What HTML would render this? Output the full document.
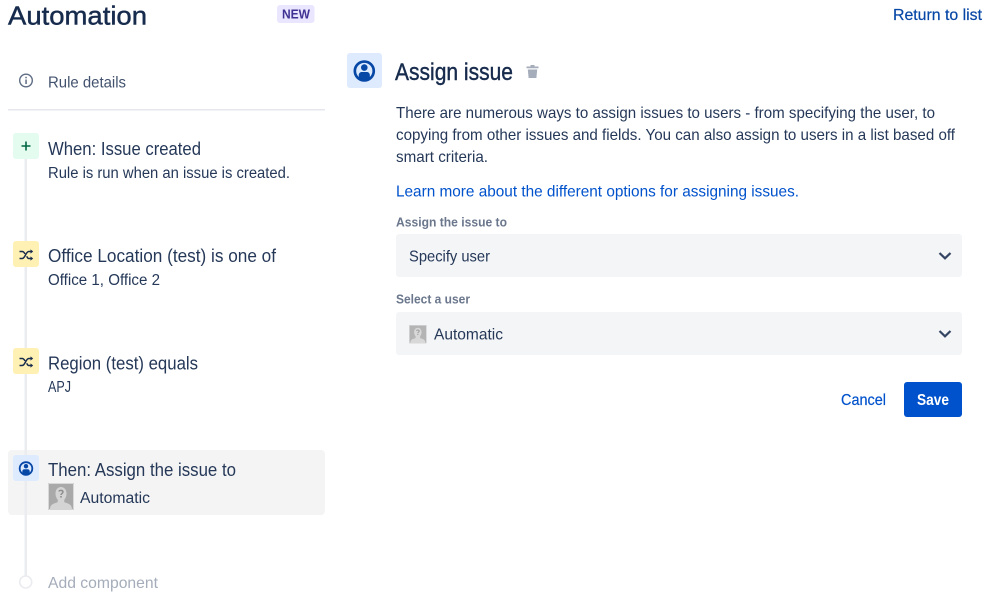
<!DOCTYPE html>
<html><head><meta charset="utf-8"><title>Automation</title>
<style>
html,body{margin:0;padding:0;background:#fff;width:999px;height:606px;overflow:hidden}
svg{display:block}
text{font-family:"Liberation Sans",sans-serif;white-space:pre}
.t{font-size:18px;fill:#253858}
.s{font-size:15.5px;fill:#253858}
.p{font-size:16px;fill:#253858}
.l{font-size:13px;font-weight:bold;fill:#6b778c}
</style></head><body>
<svg width="999" height="606" viewBox="0 0 999 606" xmlns="http://www.w3.org/2000/svg">
<defs>
<g id="sh"><path d="M2.500 9.500h2.700c3 0 3.600-7 6.600-7h2.700M2.500 2.500h2.700c1.300 0 2.100 1.100 2.800 2.400M9.700 7.300c.6 1.200 1.200 2.200 2.100 2.200h2.700" fill="none" stroke="#172b4d" stroke-width="1.500"/><path d="M13.500 .4l2.700 2.100-2.700 2.100zM13.500 7.400l2.700 2.100-2.700 2.100z" fill="#172b4d"/></g>
<g id="av"><rect width="26" height="27" rx="1" fill="#a9a9a9"/><rect x=".5" y=".5" width="25" height="26" rx="1" fill="none" stroke="#d8d8d8"/><path d="M2 27c0-5 2-6 7-7.500 1-.5 1-2 .5-3-1.500-2-2-4-2-6 0-4 2.500-6.500 5.500-6.500s5.500 2.500 5.500 6.500c0 2-.5 4-2 6-.5 1-.5 2.500.5 3 5 1.500 7 2.500 7 7.500z" fill="#d4d4d4"/><path d="M11 8.500c.3-1.500 3.800-1.700 4 .3.100 1.500-2 1.700-2 3.200" fill="none" stroke="#8e8e8e" stroke-width="1.500"/><rect x="12.200" y="13" width="1.600" height="1.600" fill="#8e8e8e"/></g>
<g id="us"><circle cx="13" cy="13" r="6.300" fill="none" stroke="#0747a6" stroke-width="1.800"/><circle cx="13" cy="10.700" r="2.200" fill="#0747a6"/><path d="M9.300 17.500v-1.800c0-1.100.9-2 2-2h3.400c1.100 0 2 .9 2 2v1.800c-1 .8-2.300 1.200-3.700 1.200s-2.700-.4-3.700-1.200z" fill="#0747a6"/></g>
</defs>

<text x="8" y="24.500" font-size="26" fill="#172b4d" stroke="#172b4d" stroke-width=".45" textLength="139" lengthAdjust="spacingAndGlyphs">Automation</text>
<rect x="277" y="5" width="37.500" height="18" rx="3" fill="#eae6ff"/>
<text x="282" y="18.500" font-size="12.500" font-weight="bold" fill="#403294" textLength="28" lengthAdjust="spacingAndGlyphs">NEW</text>
<text x="893" y="20" font-size="16" fill="#0747a6" stroke="#0747a6" stroke-width=".2" textLength="89" lengthAdjust="spacingAndGlyphs">Return to list</text>

<circle cx="26" cy="80.500" r="6.300" fill="none" stroke="#5e6c84" stroke-width="1.400"/>
<rect x="25.300" y="79.500" width="1.500" height="4.500" fill="#5e6c84"/><rect x="25.300" y="76.800" width="1.500" height="1.500" fill="#5e6c84"/>
<text x="48" y="87.500" class="p" style="fill:#42526e" textLength="78" lengthAdjust="spacingAndGlyphs">Rule details</text>
<rect x="8" y="109" width="317" height="1.500" fill="#e5e7ec"/>

<rect x="24.500" y="150" width="2.500" height="428" fill="#ebecf0"/>

<rect x="13" y="133" width="26" height="26" rx="3" fill="#e3fcef"/>
<path d="M26 141.500v9M21.500 146h9" stroke="#006644" stroke-width="1.600"/>
<text x="48" y="155" class="t" textLength="153" lengthAdjust="spacingAndGlyphs">When: Issue created</text>
<text x="48" y="178" class="s" textLength="242" lengthAdjust="spacingAndGlyphs">Rule is run when an issue is created.</text>

<rect x="13" y="241" width="26" height="26" rx="3" fill="#fff0b3"/>
<use href="#sh" x="17" y="249"/>
<text x="48" y="262" class="t" textLength="228" lengthAdjust="spacingAndGlyphs">Office Location (test) is one of</text>
<text x="48" y="285" class="s" textLength="112" lengthAdjust="spacingAndGlyphs">Office 1, Office 2</text>

<rect x="13" y="348" width="26" height="26" rx="3" fill="#fff0b3"/>
<use href="#sh" x="17" y="356"/>
<text x="48" y="369.500" class="t" textLength="150" lengthAdjust="spacingAndGlyphs">Region (test) equals</text>
<text x="48" y="392" class="s" textLength="23" lengthAdjust="spacingAndGlyphs">APJ</text>

<rect x="8" y="450" width="317" height="65" rx="4" fill="#f4f4f4"/>
<rect x="24.500" y="450" width="2.500" height="65" fill="#ebecf0"/>
<rect x="13" y="455" width="26" height="26" rx="3" fill="#deebff"/>
<use href="#us" x="13" y="455.500"/>
<text x="48" y="476" class="t" textLength="188" lengthAdjust="spacingAndGlyphs">Then: Assign the issue to</text>
<use href="#av" x="48" y="483"/>
<text x="80" y="503" class="s" textLength="70" lengthAdjust="spacingAndGlyphs">Automatic</text>

<circle cx="25.700" cy="582" r="6" fill="#fff" stroke="#ebecf0" stroke-width="1.600"/>
<text x="48" y="588" class="p" style="fill:#a5adba" textLength="110" lengthAdjust="spacingAndGlyphs">Add component</text>

<rect x="347" y="53" width="35" height="35" rx="3" fill="#deebff"/>
<g transform="translate(344.800 51.500) scale(1.500)"><use href="#us"/></g>
<text x="395" y="80" font-size="24" fill="#172b4d" stroke="#172b4d" stroke-width=".4" textLength="118" lengthAdjust="spacingAndGlyphs">Assign issue</text>
<path d="M526.500 66.500h12v1.800h-12zM530.500 65h4v1.500h-4zM527.800 69.500h9.400l-.8 8.500h-7.800z" fill="#a5adba"/>

<text x="396" y="118" class="p" textLength="539" lengthAdjust="spacingAndGlyphs">There are numerous ways to assign issues to users - from specifying the user, to</text>
<text x="396" y="140" class="p" textLength="559" lengthAdjust="spacingAndGlyphs">copying from other issues and fields. You can also assign to users in a list based off</text>
<text x="396" y="162" class="p" textLength="92" lengthAdjust="spacingAndGlyphs">smart criteria.</text>
<text x="396" y="196.500" class="p" style="fill:#0052cc" textLength="403" lengthAdjust="spacingAndGlyphs">Learn more about the different options for assigning issues.</text>

<text x="396" y="226.500" class="l" textLength="111" lengthAdjust="spacingAndGlyphs">Assign the issue to</text>
<rect x="396" y="234" width="566" height="43" rx="3" fill="#f4f5f7"/>
<text x="409" y="261.500" class="p" textLength="81" lengthAdjust="spacingAndGlyphs">Specify user</text>
<path d="M939.500 253l5.500 5.300 5.500-5.300" fill="none" stroke="#344563" stroke-width="2.200"/>

<text x="396" y="303.500" class="l" textLength="74" lengthAdjust="spacingAndGlyphs">Select a user</text>
<rect x="396" y="312" width="566" height="43" rx="3" fill="#f4f5f7"/>
<g transform="translate(409 325) scale(.68)" opacity=".85"><use href="#av"/></g>
<text x="434" y="339.500" class="p" textLength="69" lengthAdjust="spacingAndGlyphs">Automatic</text>
<path d="M939.500 331l5.500 5.300 5.500-5.300" fill="none" stroke="#344563" stroke-width="2.200"/>

<text x="841" y="405" class="p" style="fill:#0052cc" stroke="#0052cc" stroke-width=".2" textLength="45" lengthAdjust="spacingAndGlyphs">Cancel</text>
<rect x="904" y="382" width="58" height="35" rx="3" fill="#0052cc"/>
<text x="917" y="405" font-size="16" font-weight="bold" fill="#fff" textLength="32" lengthAdjust="spacingAndGlyphs">Save</text>
</svg>
</body></html>
